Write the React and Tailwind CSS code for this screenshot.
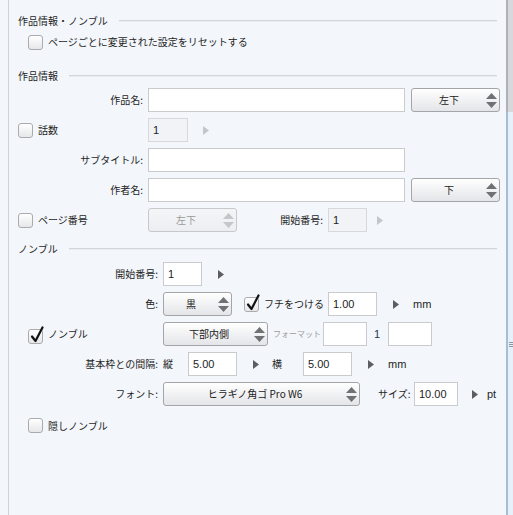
import React from 'react';

const jp = { fontFamily: '"Noto Sans CJK JP", "Noto Sans", sans-serif' };
const num = { fontFamily: '"Liberation Sans", Arial, sans-serif' };

// セクション見出し
function Header({ children, className = '' }) {
    return (
        <div className={`flex items-center h-[14px] pl-[9px] pr-[9px] ${className}`}>
            <span className="text-[10px] leading-none text-[#1f1f1f] whitespace-nowrap">{children}</span>
            <div className="flex-1 ml-[11px] h-[2px] border-t border-[#d2d6db] bg-[#e9ecf0]" />
        </div>
    );
}

function Checkbox({ checked = false, className = '' }) {
    return (
        <div className={`relative shrink-0 w-[15px] h-[15px] rounded-[3px] border border-[#a9abae] bg-gradient-to-b from-white to-[#e6e7e9] ${className}`}>
            {checked && (
                <svg className="absolute left-[1px] top-[-4px]" width="15" height="18" viewBox="0 0 15 18">
                    <path d="M2 10.5 L5.5 15 L12.5 1.5" fill="none" stroke="#111" strokeWidth="2.2" strokeLinecap="round" strokeLinejoin="round" />
                </svg>
            )}
        </div>
    );
}

function Input({ value = '', width, disabled = false }) {
    return (
        <div
            className={`shrink-0 h-6 border flex items-center pl-[4px] text-[11px] text-[#1d1d1d] ${disabled ? 'bg-[#f1f3f6] border-[#d6d8db]' : 'bg-white border-[#c9cbce]'}`}
            style={{ ...num, width }}
        >
            {value}
        </div>
    );
}

function Select({ label, width, disabled = false }) {
    return (
        <div
            className={`shrink-0 h-6 flex items-center rounded-[3px] border bg-gradient-to-b ${disabled ? 'border-[#c6c8cb] from-[#f4f5f7] to-[#eceef1]' : 'border-[#a3a5a8] from-white to-[#e4e5e8]'}`}
            style={{ width }}
        >
            <span className={`flex-1 text-center text-[10px] leading-none whitespace-nowrap ${disabled ? 'text-[#9a9a9a]' : 'text-[#1a1a1a]'}`}>
                {label}
            </span>
            <svg className="mr-[2px]" width="11" height="17" viewBox="0 0 11 17">
                <polygon points="0,7 5.5,1 11,7" fill={disabled ? '#c4c6c9' : '#6f7174'} />
                <polygon points="0,10 5.5,16 11,10" fill={disabled ? '#c4c6c9' : '#6f7174'} />
            </svg>
        </div>
    );
}

function Arrow({ disabled = false, className = '' }) {
    return (
        <svg className={`shrink-0 ${className}`} width="6" height="9" viewBox="0 0 6 9">
            <polygon points="0,0 6,4.5 0,9" fill={disabled ? '#c3c6ca' : '#5c5e61'} />
        </svg>
    );
}

function Label({ children, width }) {
    return (
        <div className="shrink-0 text-right text-[10px] leading-none text-[#1f1f1f] whitespace-nowrap" style={{ width }}>
            {children}
        </div>
    );
}

export default function App() {
    return (
        <div className="flex w-[513px] h-[515px] bg-[#f3f6fa] overflow-hidden" style={jp}>
            <div className="w-[8px] shrink-0" />
            <div className="w-px shrink-0 bg-[#cfd3d8]" />

            <div className="w-[497px] shrink-0 text-[10px] text-[#1f1f1f] whitespace-nowrap">
                <Header className="mt-[14px]">作品情報・ノンブル</Header>

                <div className="flex items-center h-[16px] mt-[6px]">
                    <Checkbox className="ml-[19px]" />
                    <span className="ml-[5px] leading-none">ページごとに変更された設定をリセットする</span>
                </div>

                <Header className="mt-[19px]">作品情報</Header>

                {/* 作品名 */}
                <div className="flex items-center h-6 mt-[5px]">
                    <Label width={134}>作品名:</Label>
                    <div className="ml-[5px]"><Input width={257} /></div>
                    <div className="ml-[6px]"><Select label="左下" width={89} /></div>
                </div>

                {/* 話数 */}
                <div className="flex items-center h-6 mt-[6px]">
                    <div className="flex items-center w-[139px] shrink-0">
                        <Checkbox className="ml-[9px]" />
                        <span className="ml-[5px] leading-none">話数</span>
                    </div>
                    <Input value="1" width={40} disabled />
                    <Arrow disabled className="ml-[15px]" />
                </div>

                {/* サブタイトル */}
                <div className="flex items-center h-6 mt-[6px]">
                    <Label width={134}>サブタイトル:</Label>
                    <div className="ml-[5px]"><Input width={257} /></div>
                </div>

                {/* 作者名 */}
                <div className="flex items-center h-6 mt-[6px]">
                    <Label width={134}>作者名:</Label>
                    <div className="ml-[5px]"><Input width={257} /></div>
                    <div className="ml-[6px]"><Select label="下" width={89} /></div>
                </div>

                {/* ページ番号 */}
                <div className="flex items-center h-6 mt-[6px]">
                    <div className="flex items-center w-[139px] shrink-0">
                        <Checkbox className="ml-[9px]" />
                        <span className="ml-[5px] leading-none">ページ番号</span>
                    </div>
                    <Select label="左下" width={89} disabled />
                    <Label width={86}>開始番号:</Label>
                    <div className="ml-[5px]"><Input value="1" width={39} disabled /></div>
                    <Arrow disabled className="ml-[10px]" />
                </div>

                <Header className="mt-[10px]">ノンブル</Header>

                {/* 開始番号 */}
                <div className="flex items-center h-6 mt-[6px]">
                    <Label width={149}>開始番号:</Label>
                    <div className="ml-[5px]"><Input value="1" width={39} /></div>
                    <Arrow className="ml-[16px]" />
                </div>

                {/* 色 */}
                <div className="flex items-center h-6 mt-[6px]">
                    <Label width={149}>色:</Label>
                    <div className="ml-[5px]"><Select label="黒" width={69} /></div>
                    <Checkbox checked className="ml-[12px]" />
                    <span className="ml-[5px] w-[64px] shrink-0 leading-none">フチをつける</span>
                    <Input value="1.00" width={49} />
                    <Arrow className="ml-[16px]" />
                    <span className="ml-[14px] text-[11px] leading-none" style={num}>mm</span>
                </div>

                {/* ノンブル */}
                <div className="flex items-center h-6 mt-[6px]">
                    <div className="flex items-center w-[154px] shrink-0">
                        <Checkbox checked className="ml-[19px] mt-[4px]" />
                        <span className="ml-[5px] leading-none">ノンブル</span>
                    </div>
                    <Select label="下部内側" width={105} />
                    <span className="ml-[5px] w-[50px] shrink-0 text-[8px] leading-none text-[#9b9b9b]">フォーマット</span>
                    <Input width={44} />
                    <span className="ml-[7px] w-[14px] shrink-0 text-[11px] leading-none text-[#23364f]" style={num}>1</span>
                    <Input width={44} />
                </div>

                {/* 基本枠との間隔 */}
                <div className="flex items-center h-6 mt-[6px]">
                    <Label width={149}>基本枠との間隔:</Label>
                    <span className="ml-[5px] w-[25px] shrink-0 leading-none">縦</span>
                    <Input value="5.00" width={49} />
                    <Arrow className="ml-[16px]" />
                    <span className="ml-[13px] w-[31px] shrink-0 leading-none">横</span>
                    <Input value="5.00" width={49} />
                    <Arrow className="ml-[16px]" />
                    <span className="ml-[14px] text-[11px] leading-none" style={num}>mm</span>
                </div>

                {/* フォント */}
                <div className="flex items-center h-6 mt-[6px]">
                    <Label width={149}>フォント:</Label>
                    <div className="ml-[5px]"><Select label="ヒラギノ角ゴ Pro W6" width={197} /></div>
                    <span className="ml-[18px] w-[36px] shrink-0 leading-none">サイズ:</span>
                    <Input value="10.00" width={44} />
                    <Arrow className="ml-[14px]" />
                    <span className="ml-[9px] text-[11px] leading-none" style={num}>pt</span>
                </div>

                {/* 隠しノンブル */}
                <div className="flex items-center h-[15px] mt-[12px]">
                    <Checkbox className="ml-[19px]" />
                    <span className="ml-[5px] leading-none">隠しノンブル</span>
                </div>
            </div>

            {/* 右端のスプリッター */}
            <div className="w-[2px] shrink-0 flex flex-col">
                <div className="h-[112px] bg-[#aeb2b8]" />
                <div className="flex-1 bg-[#a9bdd2]" />
            </div>
            <div className="flex-1 flex flex-col">
                <div className="h-[112px] bg-[#d6d8dc]" />
                <div className="flex-1 bg-[#e6f0fa] flex flex-col items-center pt-[230px]">
                    <div className="w-[4px] h-px bg-[#8f959c]" />
                    <div className="w-[4px] h-px bg-[#8f959c] mt-[1px]" />
                    <div className="w-[4px] h-px bg-[#8f959c] mt-[1px]" />
                </div>
            </div>
        </div>
    );
}
